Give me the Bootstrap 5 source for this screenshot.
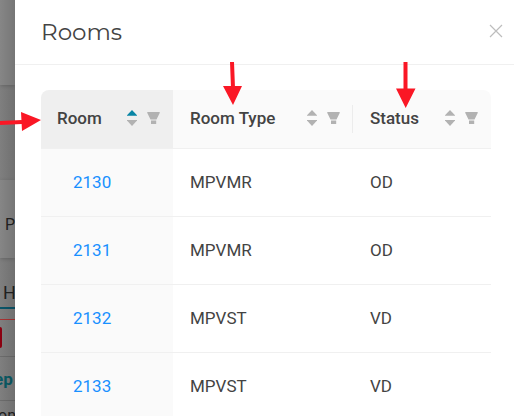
<!DOCTYPE html>
<html lang="en">
<head>
<meta charset="utf-8">
<meta name="viewport" content="width=device-width, initial-scale=1">
<title>Rooms</title>
<link href="https://cdn.jsdelivr.net/npm/bootstrap@5.3.0/dist/css/bootstrap.min.css" rel="stylesheet">
<style>
body { font-family: Roboto, "Liberation Sans", sans-serif; font-size: 17px; color: #434343; background: #818181; }
.backdrop-page { width: 15px; flex: none; white-space: nowrap; background: #7f7f7f; color: #222; }
.backdrop-page::after { content: ""; position: absolute; inset: 0; background: linear-gradient(to right, transparent, rgba(0,0,0,.12)); }
.top-panel { height: 85px; background: #868686; box-shadow: 0 1px 4px rgba(0,0,0,.2); }
.mid-panel { height: 78px; margin-top: 95px; padding: 33px 0 0 5px; background: #868686; box-shadow: 0 1px 4px rgba(0,0,0,.2); line-height: 24px; font-size: 16px; }
.tab-line { height: 51px; padding: 23px 0 0 3px; font-size: 18px; line-height: 24px; border-bottom: 2px solid #0a5569; }
.alert-line { height: 38px; margin-top: 10px; padding-top: 7px; border-top: 1px solid #a33; border-bottom: 1px solid #6c6c6c; }
.alert-chip { width: 2px; height: 21px; background: #8c0010; border-radius: 0 2px 2px 0; }
.dep-line { height: 44px; line-height: 44px; margin-left: -6px; color: #0a5a64; font-weight: 700; border-bottom: 1px solid #6c6c6c; }
.next-line { padding-top: 5px; line-height: 20px; font-size: 16px; margin-left: -2px; }
.drawer-head { height: 65px; padding: 0 9px 0 26px; border-bottom: 1px solid #f0f0f0; }
.drawer-head h1 { font-family: Montserrat, Inter, sans-serif; font-size: 23px; line-height: 32px; font-weight: 400; color: #434343; }
.close-x { width: 18px; height: 18px; line-height: 0; }
.drawer-main { padding: 25px 23px 0 26px; }
.rooms { table-layout: fixed; border-collapse: separate; border-spacing: 0; }
.rooms th, .rooms td { height: 68px; padding: 0 17px; vertical-align: middle; border-bottom: 1px solid #f0f0f0; line-height: 24px; }
.rooms th { height: 59px; padding-bottom: 2px; background: #fafafa; font-weight: 500; position: relative; }
.rooms td { padding-bottom: 2px; }
.rooms th.sorted { padding-left: 16px; background: #efefef; border-top-left-radius: 8px; }
.rooms th:last-child { border-top-right-radius: 8px; }
.rooms td:first-child { background: #fafafa; padding-left: 32px; }
.rooms td a { color: #1890ff; }
.col-room { width: 132px; }
.col-status { width: 138px; }
.th-tools { gap: 10px; margin-right: -4px; }
.split::after { content: ""; position: absolute; right: 0; top: 15px; height: 28px; border-right: 1px solid #ececec; }
.arrow { position: absolute; pointer-events: none; }
</style>
<script src="https://cdn.jsdelivr.net/npm/bootstrap@5.3.0/dist/js/bootstrap.bundle.min.js"></script>
</head>
<body>
<svg width="0" height="0" class="position-absolute" aria-hidden="true">
  <symbol id="funnel" viewBox="0 0 13 13"><path fill="#b2b2b2" d="M.3 0h12.400v1L9.500 7.500h-6L.3 1zM4 8.500h5.200V12H4z"/></symbol>
  <symbol id="caret-up" viewBox="0 0 10 6"><path d="M5 0l5 5.200v.5H0v-.5z"/></symbol>
  <symbol id="caret-down" viewBox="0 0 10 6"><path d="M0 0h10v.6L5 6 0 .6z"/></symbol>
</svg>
<div class="d-flex vh-100 overflow-hidden position-relative">
  <div class="backdrop-page overflow-hidden position-relative" aria-hidden="true">
    <div class="top-panel"></div>
    <div class="mid-panel">P</div>
    <div class="tab-line">H</div>
    <div class="alert-line"><div class="alert-chip"></div></div>
    <div class="dep-line">ep</div>
    <div class="next-line">on</div>
  </div>
  <main class="flex-grow-1 bg-white">
    <header class="drawer-head d-flex align-items-center justify-content-between">
      <h1 class="m-0">Rooms</h1>
      <button type="button" class="close-x btn p-0 border-0" aria-label="Close">
        <svg width="18" height="18" viewBox="0 0 18 18"><path d="M3 2l12 12M15 2L3 14" stroke="#bdbdbd" stroke-width="1.200"/></svg>
      </button>
    </header>
    <div class="drawer-main">
      <table class="rooms w-100">
        <colgroup><col class="col-room"><col><col class="col-status"></colgroup>
        <thead><tr>
          <th class="sorted" scope="col"><div class="d-flex align-items-center justify-content-between">Room
            <span class="th-tools d-flex align-items-center"><button type="button" class="btn p-0 border-0 d-flex flex-column gap-1" aria-label="Sort by room"><svg width="10" height="6" fill="#0885a5"><use href="#caret-up"/></svg><svg width="10" height="6" fill="#b2b2b2"><use href="#caret-down"/></svg></button><button type="button" class="btn p-0 border-0 d-flex" aria-label="Filter room"><svg width="13" height="13"><use href="#funnel"/></svg></button></span></div></th>
          <th class="split" scope="col"><div class="d-flex align-items-center justify-content-between">Room Type
            <span class="th-tools d-flex align-items-center"><button type="button" class="btn p-0 border-0 d-flex flex-column gap-1" aria-label="Sort by room type"><svg width="10" height="6" fill="#b2b2b2"><use href="#caret-up"/></svg><svg width="10" height="6" fill="#b2b2b2"><use href="#caret-down"/></svg></button><button type="button" class="btn p-0 border-0 d-flex" aria-label="Filter room type"><svg width="13" height="13"><use href="#funnel"/></svg></button></span></div></th>
          <th scope="col"><div class="d-flex align-items-center justify-content-between">Status
            <span class="th-tools d-flex align-items-center"><button type="button" class="btn p-0 border-0 d-flex flex-column gap-1" aria-label="Sort by status"><svg width="10" height="6" fill="#b2b2b2"><use href="#caret-up"/></svg><svg width="10" height="6" fill="#b2b2b2"><use href="#caret-down"/></svg></button><button type="button" class="btn p-0 border-0 d-flex" aria-label="Filter status"><svg width="13" height="13"><use href="#funnel"/></svg></button></span></div></th>
        </tr></thead>
        <tbody>
          <tr><td><a class="text-decoration-none" href="#">2130</a></td><td>MPVMR</td><td>OD</td></tr>
          <tr><td><a class="text-decoration-none" href="#">2131</a></td><td>MPVMR</td><td>OD</td></tr>
          <tr><td><a class="text-decoration-none" href="#">2132</a></td><td>MPVST</td><td>VD</td></tr>
          <tr><td><a class="text-decoration-none" href="#">2133</a></td><td>MPVST</td><td>VD</td></tr>
        </tbody>
      </table>
    </div>
  </main>
  <svg class="arrow top-0 start-0" width="514" height="150" aria-hidden="true" fill="#fa1725" stroke="#fa1725">
    <path stroke-width="4" d="M0 123l22-1M232 62l1 26M405.500 62v28"/>
    <path stroke="none" d="M21 112l20 8-19 11zM223 86h19l-9 19zM396 88.500h19.500L405.700 108z"/>
  </svg>
</div>
</body>
</html>
